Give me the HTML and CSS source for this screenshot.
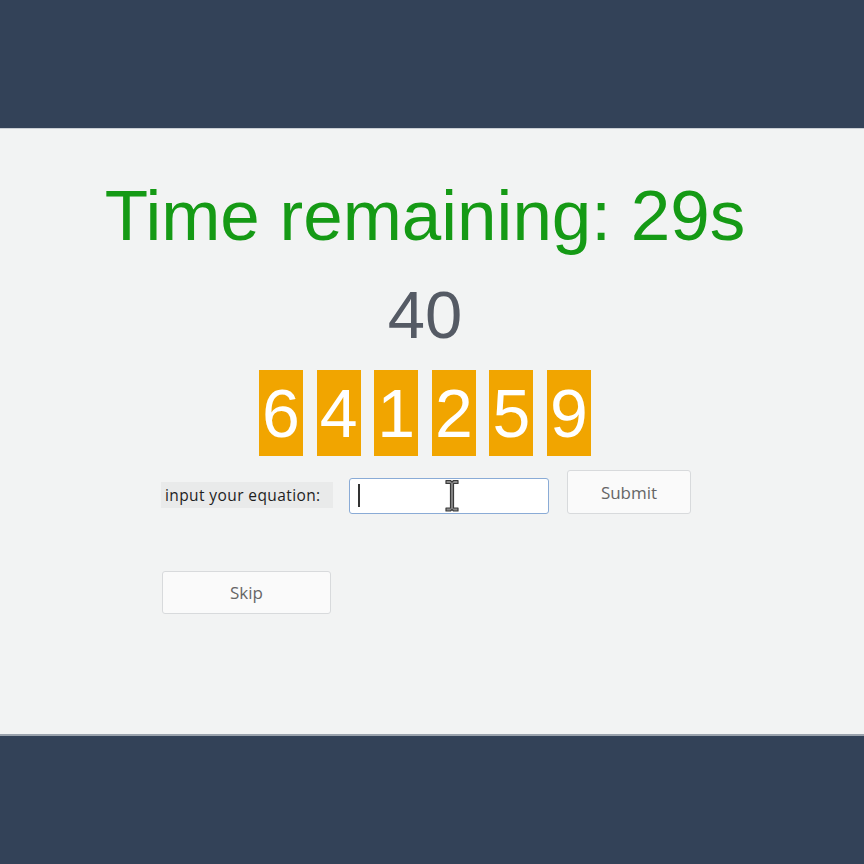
FILE: index.html
```html
<!DOCTYPE html>
<html>
<head>
<meta charset="utf-8">
<link rel="stylesheet" href="styles.css">
</head>
<body>
<div class="band"></div>
<main class="panel">
  <h1 class="timer">Time remaining: 29s</h1>
  <div class="target">40</div>
  <div class="tiles">
    <span class="tile">6</span>
    <span class="tile">4</span>
    <span class="tile">1</span>
    <span class="tile">2</span>
    <span class="tile">5</span>
    <span class="tile">9</span>
  </div>
  <div class="form">
    <div class="row">
      <label class="label" for="eq">input your equation:</label>
      <div class="field">
        <input id="eq" class="input" type="text" value="">
        <span class="caret"></span>
        <svg class="ibeam" width="16" height="34" viewBox="0 0 16 34">
          <path d="M2 1.5h4.5l1.5 1.5l1.5-1.5h4.5v3h-4.5v24.5h4.5v3h-4.5l-1.5-1.5l-1.5 1.5h-4.5v-3h4.5v-24.5h-4.5z" fill="#8a8a8a" stroke="#3a3a3a" stroke-width="1.2" stroke-linejoin="round"/>
        </svg>
      </div>
      <button class="btn submit">Submit</button>
    </div>
    <button class="btn skip">Skip</button>
  </div>
</main>
<div class="band bottom"></div>
</body>
</html>
```
FILE: styles.css
```css
html, body {
  margin: 0;
  padding: 0;
}
body {
  background: #334258;
  width: 864px;
  height: 864px;
  overflow: hidden;
  font-family: "Liberation Sans", Arial, sans-serif;
}
.band {
  height: 128px;
  background: #334258;
}
.band.bottom {
  height: 128px;
}
.panel {
  height: 608px;
  box-sizing: border-box;
  background: #f2f3f3;
  border-top: 1px solid #c9ced4;
  border-bottom: 2px solid #9aa2ac;
  padding-top: 51px;
  padding-right: 14px;
  display: flex;
  flex-direction: column;
  align-items: center;
}
.timer {
  margin: 0;
  font-weight: normal;
  font-size: 71px;
  line-height: 72px;
  color: #159a15;
  white-space: nowrap;
}
.target {
  margin-top: 30px;
  font-size: 67px;
  line-height: 66px;
  color: #555a64;
}
.tiles {
  margin-top: 22px;
  display: flex;
  gap: 13.6px;
}
.tile {
  width: 44px;
  height: 86px;
  background: #f1a500;
  color: #ffffff;
  font-size: 68px;
  line-height: 86px;
  text-align: center;
}
.form {
  align-self: stretch;
  padding-left: 161px;
  display: flex;
  flex-direction: column;
  align-items: flex-start;
}
.row {
  margin-top: 14px;
  display: flex;
  align-items: center;
  height: 44px;
}
.label {
  box-sizing: border-box;
  width: 172px;
  background: #e9eaea;
  height: 26px;
  line-height: 26px;
  padding: 0 4px;
  font-family: "Open Sans", "Noto Sans", sans-serif;
  font-size: 15.5px;
  font-weight: 500;
  letter-spacing: 0.4px;
  white-space: nowrap;
  color: #1e1e1e;
  margin-top: 6px;
}
.field {
  position: relative;
  margin-left: 16px;
  margin-top: 8px;
}
.input {
  display: block;
  box-sizing: border-box;
  width: 200px;
  height: 36px;
  border: 1px solid #8aabd6;
  border-radius: 3px;
  background: #ffffff;
  outline: none;
  padding: 0 8px;
}
.caret {
  position: absolute;
  left: 9px;
  top: 6px;
  width: 2px;
  height: 23px;
  background: #333333;
}
.ibeam {
  position: absolute;
  left: 95px;
  top: 1px;
}
.btn {
  box-sizing: border-box;
  background: #fafafa;
  border: 1px solid #d8dadc;
  border-radius: 3px;
  font-family: "Open Sans", "Noto Sans", sans-serif;
  font-size: 17px;
  color: #666666;
  padding: 0;
}
.submit {
  margin-left: 18px;
  width: 124px;
  height: 44px;
}
.skip {
  margin-top: 57px;
  margin-left: 1px;
  width: 169px;
  height: 43px;
}
```
